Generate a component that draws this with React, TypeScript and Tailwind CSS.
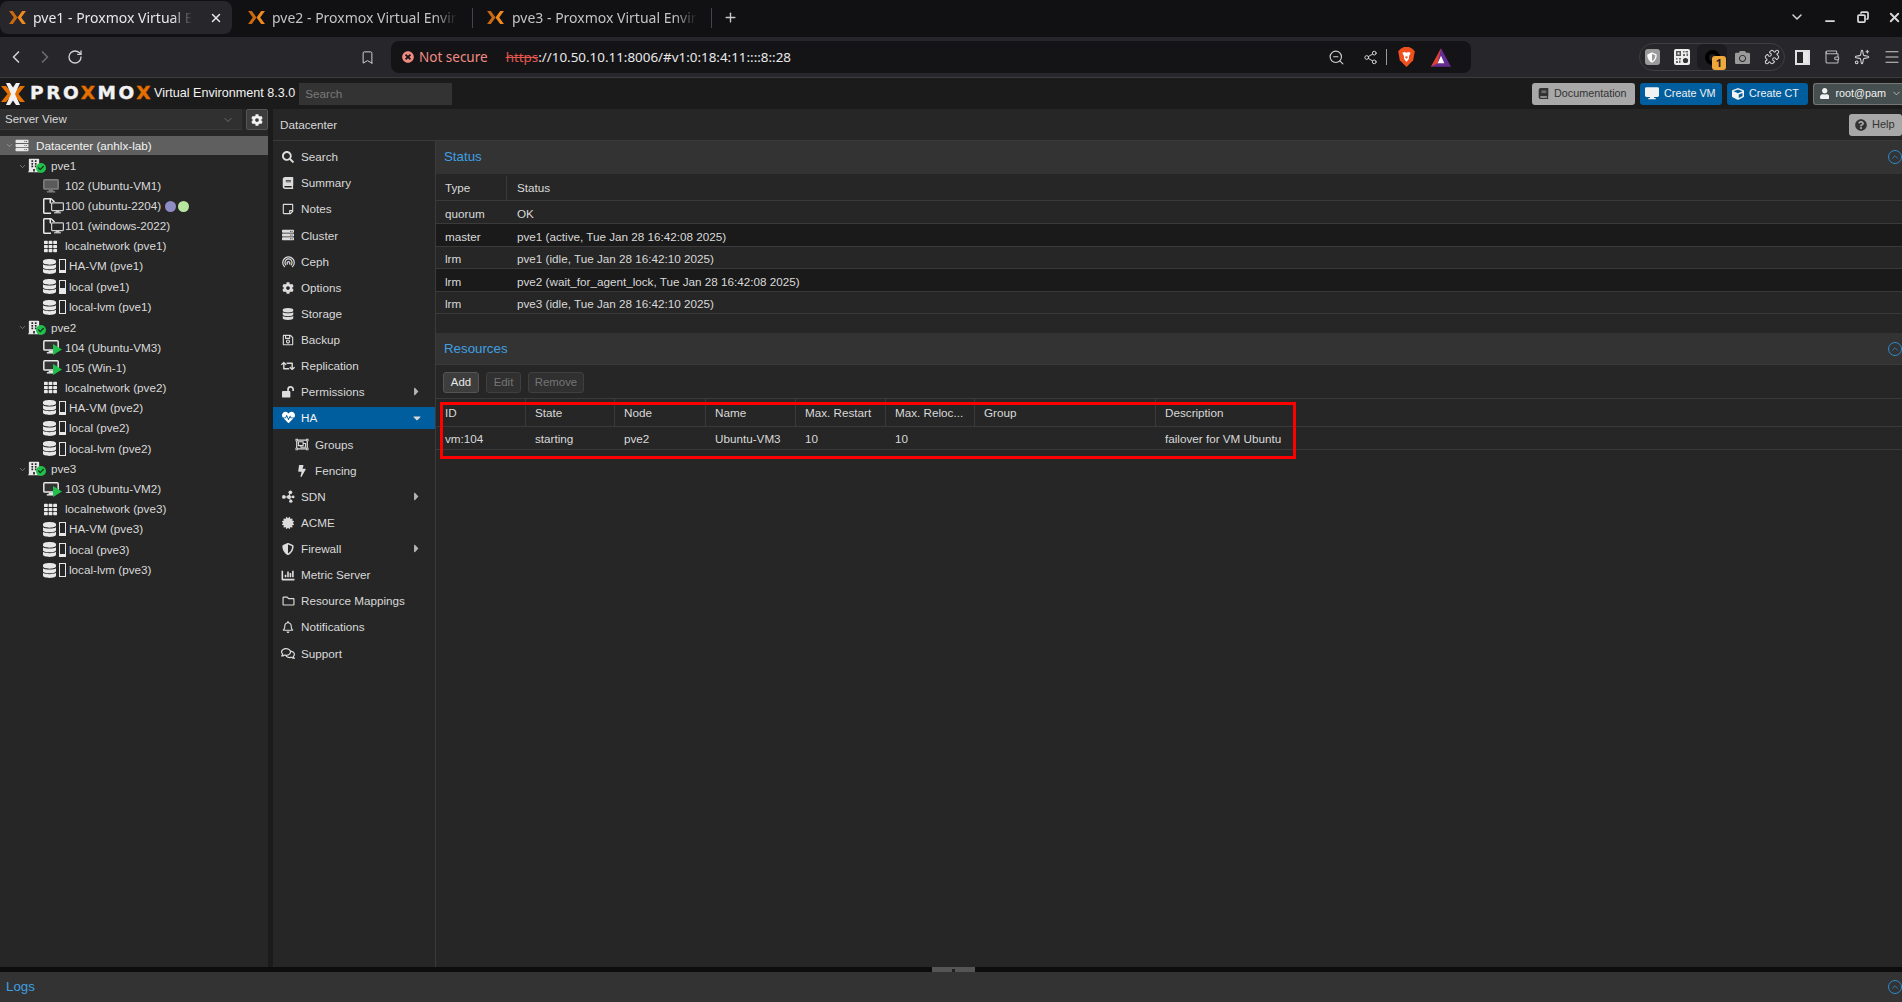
import React from 'react';
import { ChevronLeft, ChevronRight, RotateCw, Bookmark, ZoomOut, Share2, Puzzle, Plus, X, ChevronDown, ChevronUp, Minus, Menu, Wallet, Sparkles, Copy } from 'lucide-react';
import {
  FaSearch, FaBook, FaRegStickyNote, FaServer, FaCog, FaDatabase, FaRegSave, FaRetweet, FaHeartbeat,
  FaRegObjectGroup, FaBolt, FaCertificate, FaShieldAlt, FaRegFolder, FaRegBell, FaRegComments, FaCube,
  FaUser, FaQuestionCircle, FaTh, FaCaretRight, FaCaretDown, FaBuilding, FaCheck, FaRegFile, FaChartBar,
  FaTimesCircle, FaCamera,
} from 'react-icons/fa';

const ProxmoxMark = ({ className }: { className: string }) => (
  <svg viewBox="0 0 24 22" className={className}>
    <polygon points="0,3 5,3 12,11 5,19 0,19 6.5,11" fill="#e57000" />
    <polygon points="24,3 19,3 12,11 19,19 24,19 17.5,11" fill="#e57000" />
    <polygon points="5,0 9,0 12,4.5 15,0 19,0 14,11 19,22 15,22 12,17.5 9,22 5,22 10,11" fill="#f2f2f2" />
  </svg>
);

const TabMark = () => (
  <svg viewBox="0 0 18 16" className="w-[17px] h-[15px] shrink-0">
    <polygon points="0,1 4,1 9,8 4,15 0,15 5,8" fill="#c96a10" />
    <polygon points="18,1 14,1 9,8 14,15 18,15 13,8" fill="#f08a1c" />
  </svg>
);

const Tab = ({ title, active, w, pad, gap }: { title: string; active?: boolean; w: string; pad: string; gap: string }) => (
  <div className={w + ' ' + pad + (active
    ? ' h-[33px] mt-[1px] rounded-lg bg-[#26262b] flex items-center pr-[9px] text-[#e8e8e8]'
    : ' h-[33px] mt-[1px] flex items-center text-[#c4c4c4]')}>
    <TabMark />
    <span className={gap + ' whitespace-nowrap [mask-image:linear-gradient(to_right,black_88%,transparent)]'}>{title}</span>
    {active && <X className="w-[14px] h-[14px] ml-auto" strokeWidth={2.5} />}
    {!active && <div className="w-px h-[20px] bg-[#44444a] ml-auto" />}
  </div>
);

const Ext = ({ children, className }: { children: React.ReactNode; className?: string }) => (
  <div className={'w-[30px] h-full flex items-center justify-center relative shrink-0 ' + (className ?? '')}>{children}</div>
);

const BrowserChrome = () => (
  <div className="font-['Noto_Sans',sans-serif]">
    <div className="h-[37px] bg-[#111114] flex items-start text-[14px]">
      <Tab title="pve1 - Proxmox Virtual E" active w="w-[232px]" pad="pl-[9px]" gap="ml-[7px]" />
      <Tab title="pve2 - Proxmox Virtual Envir" w="w-[241px]" pad="pl-[16px]" gap="ml-[7px]" />
      <Tab title="pve3 - Proxmox Virtual Envir" w="w-[239px]" pad="pl-[14px]" gap="ml-[8px]" />
      <Plus className="w-[15px] h-[15px] text-[#c8c8c8] mt-[10px] ml-[11px]" strokeWidth={2.2} />
      <div className="ml-auto flex items-center h-[34px] text-[#d8d8d8]">
        <ChevronDown className="w-[16px] h-[16px] mr-[18px]" strokeWidth={2.2} />
        <Minus className="w-[14px] h-[14px] mr-[20px] mt-[7px]" strokeWidth={3} />
        <Copy className="w-[12px] h-[12px] mr-[18px] -scale-x-100" strokeWidth={3.5} />
        <X className="w-[15px] h-[15px]" strokeWidth={3} />
      </div>
    </div>
    <div className="h-[41px] bg-[#26262b] border-b border-[#3c3c40] flex items-center text-[#d0d0d0]">
      <ChevronLeft className="w-[20px] h-[20px] ml-[6px]" strokeWidth={2} />
      <ChevronRight className="w-[20px] h-[20px] ml-[9px] text-[#6b6b70]" strokeWidth={2} />
      <RotateCw className="w-[16px] h-[16px] ml-[12px]" strokeWidth={2} />
      <Bookmark className="w-[15px] h-[17px] ml-[277px]" strokeWidth={1.6} />
      <div className="ml-[16px] w-[1080px] h-[32px] rounded-lg bg-[#141417] flex items-center">
        <FaTimesCircle className="w-[12px] h-[12px] ml-[11px] text-[#f28b82]" />
        <span className="ml-[5px] text-[#f28b82] text-[13.5px]">Not secure</span>
        <span className="ml-[18px] text-[#e9e9e9] text-[13.4px]"><span className="text-[#e2574c] line-through">https</span>://10.50.10.11:8006/#v1:0:18:4:11::::8::28</span>
        <ZoomOut className="w-[17px] h-[17px] ml-auto" strokeWidth={1.6} />
        <Share2 className="w-[15px] h-[15px] ml-[18px]" strokeWidth={1.6} />
        <div className="w-px h-[16px] bg-[#9a9a9a] ml-[8px]" />
        <svg viewBox="0 0 20 24" className="w-[17px] h-[20px] ml-[11px]">
          <path d="M3 2 L7 0 H13 L17 2 L20 5 L18 16 L10 24 L2 16 L0 5 Z" fill="#f0501e" />
          <path d="M5 7 L8 6 L10 7 L12 6 L15 7 L13 11 L13 14 L10 18 L7 14 L7 11 Z" fill="#fff" />
          <path d="M8 12 L10 14 L12 12 L10 11 Z" fill="#f0501e" />
        </svg>
        <svg viewBox="0 0 24 22" className="w-[20px] h-[19px] ml-[16px] mr-[20px]">
          <polygon points="12,0 24,22 0,22" fill="#662d91" />
          <polygon points="12,0 0,22 8,18" fill="#e2402a" />
          <polygon points="12,9 16,18 8,18" fill="#fff" />
        </svg>
      </div>
      <div className="ml-[168px] h-[28px] w-[146px] rounded-[14px] border border-[#3e3e44] flex items-center justify-center">
        <Ext>
          <div className="w-[15px] h-[16px] rounded-[3px] bg-[#9a9a9a] flex items-center justify-center"><FaShieldAlt className="w-[10px] h-[11px] text-white" /></div>
        </Ext>
        <Ext>
          <svg viewBox="0 0 16 16" className="w-[16px] h-[16px]">
            <rect width="16" height="16" rx="2" fill="#eee" />
            <path d="M2 2h5v5H2z M3.5 3.5v2h2v-2z" fill="#555" fillRule="evenodd" />
            <path d="M9 2h1.5v1.5H9z M11.5 2H14v1.5h-2.5z M9 5h2v2H9z M12.5 4.5H14V7h-1.5z" fill="#666" />
            <path d="M2 9h1.5v1.5H2z M5 9h2v1.5H5z M2 12h2v2H2z M5 11.5h1.5V14H5z" fill="#666" />
            <circle cx="11.5" cy="11.5" r="2.6" fill="#333" />
          </svg>
        </Ext>
        <Ext className="bg-[#1c1c20] rounded-md">
          <div className="w-[15px] h-[15px] rounded-full border-[4px] border-black" />
          <span className="absolute right-[1px] bottom-[0px] w-[14px] h-[14px] rounded-[3px] bg-[#f0a83c] text-[#222] text-[11px] font-bold leading-[14px] text-center">1</span>
        </Ext>
        <Ext><FaCamera className="w-[15px] h-[15px] text-[#9a9a9a]" /></Ext>
        <Ext><Puzzle className="w-[16px] h-[16px]" strokeWidth={1.6} /></Ext>
      </div>
      <div className="ml-[10px] w-[15px] h-[15px] border-2 border-[#e0e0e0] flex shrink-0"><div className="w-[6px]" /><div className="flex-1 bg-[#e8e8e8]" /></div>
      <Wallet className="w-[16px] h-[16px] ml-[14px] text-[#bdbdbd] shrink-0" strokeWidth={1.6} />
      <Sparkles className="w-[16px] h-[16px] ml-[14px] shrink-0" strokeWidth={1.6} />
      <Menu className="w-[18px] h-[18px] ml-[13px] shrink-0" strokeWidth={1.6} />
    </div>
  </div>
);

const PveButton = ({ icon, label, className, gap, tail }: { icon: React.ReactNode; label: string; className: string; gap?: string; tail?: React.ReactNode }) => (
  <div className={'h-[22px] rounded-[3px] flex items-center ' + (gap ?? 'gap-[5px]') + ' ' + className}>
    {icon}
    <span>{label}</span>
    {tail}
  </div>
);

const PveHeader = () => (
  <div className="h-[31px] bg-[#1b1b1b] flex items-center text-[10.8px]">
    <ProxmoxMark className="w-[24px] h-[22px] ml-[1px] shrink-0" />
    <span className="ml-[5px] font-['DejaVu_Sans',sans-serif] font-bold text-[18.5px] leading-none tracking-[2.6px] text-[#f2f2f2] [-webkit-text-stroke:0.4px]">PRO<span className="text-[#e57000]">X</span>MO<span className="text-[#e57000]">X</span></span>
    <span className="ml-[1px] text-[#f2f2f2] text-[12.6px] whitespace-nowrap">Virtual Environment 8.3.0</span>
    <div className="ml-[4px] w-[153px] h-[22px] bg-[#333] text-[#7a7a7a] text-[11.7px] flex items-center pl-[6px]">Search</div>
    <div className="ml-auto flex gap-[5px]">
      <PveButton className="w-[103px] pl-[6px] bg-[#a8a8a8] text-[#333]" gap="gap-[5px]" icon={<FaBook className="w-[11px] h-[11px]" />} label="Documentation" />
      <PveButton className="w-[82px] pl-[5px] bg-[#005e9e] text-[#f2f2f2]" gap="gap-[5px]" icon={<DesktopIcon cls="w-[14px] h-[13px]" frame="#f2f2f2" screen="#f2f2f2" />} label="Create VM" />
      <PveButton className="w-[81px] pl-[5px] bg-[#005e9e] text-[#f2f2f2]" gap="gap-[5px]" icon={<FaCube className="w-[12px] h-[12px]" />} label="Create CT" />
      <PveButton className="w-[89px] pl-[6px] bg-[#454f4f] border border-[#757575] text-[#f2f2f2] rounded-r-none border-r-0" gap="gap-[6px]" icon={<FaUser className="w-[10px] h-[11px]" />} label="root@pam" tail={<ChevronDown className="w-[11px] h-[11px] -ml-[1px] text-[#c0c0c0] shrink-0" />} />
    </div>
  </div>
);

function DesktopIcon({ cls, frame, screen }: { cls: string; frame: string; screen: string }) {
  return (
    <svg viewBox="0 0 17 15" className={cls}>
      <rect x="0.8" y="0.8" width="15.4" height="10" rx="1" fill={screen} stroke={frame} strokeWidth="1.6" />
      <rect x="6" y="11.5" width="5" height="2" fill={frame} />
      <rect x="4" y="13" width="9" height="1.5" fill={frame} />
    </svg>
  );
}

const Storage = ({ level }: { level: string }) => (
  <div className="flex items-center shrink-0">
    <FaDatabase className="w-[13px] h-[15px] text-[#e8e8e8]" />
    <div className="ml-[3px] w-[7px] h-[14px] border border-[#e8e8e8] flex items-end"><div className={level + ' w-full bg-[#e8e8e8]'} /></div>
  </div>
);

const Guest = ({ kind }: { kind: 'stopped' | 'run' | 'template' }) => {
  if (kind === 'template') {
    return (
      <div className="w-[20px] h-[16px] relative shrink-0">
        <FaRegFile className="w-[12px] h-[16px] text-[#e8e8e8]" />
        <div className="absolute left-[8px] top-[4px] bg-[#262626]">
          <DesktopIcon cls="w-[13px] h-[12px]" frame="#d0d0d0" screen="#262626" />
        </div>
      </div>
    );
  }
  return (
    <div className="w-[20px] h-[15px] relative shrink-0">
      {kind === 'run'
        ? <DesktopIcon cls="w-[16px] h-[14px]" frame="#e8e8e8" screen="#333" />
        : <DesktopIcon cls="w-[16px] h-[14px]" frame="#808080" screen="#5a5a5a" />}
      {kind === 'run' && (
        <svg viewBox="0 0 9 11" className="w-[9px] h-[11px] absolute left-[10px] top-[4px]">
          <polygon points="0,0 9,5.5 0,11" fill="#21bf4b" />
        </svg>
      )}
    </div>
  );
};

const NodeIcon = () => (
  <div className="w-[20px] h-[16px] relative shrink-0">
    <FaBuilding className="w-[12px] h-[15px] text-[#e8e8e8]" />
    <div className="absolute left-[8px] top-[5px] w-[10px] h-[10px] rounded-full bg-[#21bf4b] flex items-center justify-center">
      <FaCheck className="w-[6px] h-[6px] text-[#10331a]" />
    </div>
  </div>
);

const NodeRow = ({ name }: { name: string }) => (
  <div className="h-[20px] flex items-center pl-[18px]">
    <ChevronDown className="w-[9px] h-[9px] text-[#8c8c8c] mr-[1px]" />
    <NodeIcon />
    <span className="ml-[3px]">{name}</span>
  </div>
);

const GuestRow = ({ kind, label, tags }: { kind: 'stopped' | 'run' | 'template'; label: string; tags?: boolean }) => (
  <div className="h-[20px] flex items-center pl-[43px]">
    <Guest kind={kind} />
    <span className="ml-[2px]">{label}</span>
    {tags && (
      <>
        <span className="ml-[4px] w-[11px] h-[11px] rounded-full bg-[#8f8bc4]" />
        <span className="ml-[2px] w-[11px] h-[11px] rounded-full bg-[#b8e6a0]" />
      </>
    )}
  </div>
);

const NetRow = ({ label }: { label: string }) => (
  <div className="h-[20px] flex items-center pl-[43px]">
    <FaTh className="w-[15px] h-[13px] text-[#e8e8e8] mr-[7px]" />
    <span>{label}</span>
  </div>
);

const StoreRow = ({ label, level }: { label: string; level: string }) => (
  <div className="h-[20.5px] flex items-center pl-[43px]">
    <Storage level={level} />
    <span className="ml-[3px]">{label}</span>
  </div>
);

const Tree = () => (
  <div className="w-[268px] shrink-0 bg-[#262626] text-[11.7px] text-[#d9d9d9]">
    <div className="h-[21px] flex">
      <div className="w-[242px] bg-[#303030] flex items-center pl-[5px] pr-[8px] pt-[1px] border-b border-[#3a3a3a]">
        <span className="text-[#d9d9d9] text-[11.5px]">Server View</span>
        <ChevronDown className="w-[12px] h-[12px] ml-auto text-[#6f6f6f]" />
      </div>
      <div className="ml-[4px] w-[22px] bg-[#3d3d3d] border border-[#555] rounded-[2px] flex items-center justify-center">
        <FaCog className="w-[12px] h-[12px] text-[#f2f2f2]" />
      </div>
    </div>
    <div className="pt-[6px]">
      <div className="h-[19px] mb-[1px] bg-[#5f5f5f] flex items-center pl-[5px] text-[#f2f2f2]">
        <ChevronDown className="w-[9px] h-[9px] text-[#a0a0a0]" />
        <FaServer className="w-[16px] h-[13px] text-[#e8e8e8]" />
        <span className="ml-[6px]">Datacenter (anhlx-lab)</span>
      </div>
      <NodeRow name="pve1" />
      <GuestRow kind="stopped" label="102 (Ubuntu-VM1)" />
      <GuestRow kind="template" label="100 (ubuntu-2204)" tags />
      <GuestRow kind="template" label="101 (windows-2022)" />
      <NetRow label="localnetwork (pve1)" />
      <StoreRow label="HA-VM (pve1)" level="h-[2px]" />
      <StoreRow label="local (pve1)" level="h-[5px]" />
      <StoreRow label="local-lvm (pve1)" level="h-0" />
      <NodeRow name="pve2" />
      <GuestRow kind="run" label="104 (Ubuntu-VM3)" />
      <GuestRow kind="run" label="105 (Win-1)" />
      <NetRow label="localnetwork (pve2)" />
      <StoreRow label="HA-VM (pve2)" level="h-[2px]" />
      <StoreRow label="local (pve2)" level="h-[2px]" />
      <StoreRow label="local-lvm (pve2)" level="h-0" />
      <NodeRow name="pve3" />
      <GuestRow kind="run" label="103 (Ubuntu-VM2)" />
      <NetRow label="localnetwork (pve3)" />
      <StoreRow label="HA-VM (pve3)" level="h-[2px]" />
      <StoreRow label="local (pve3)" level="h-[2px]" />
      <StoreRow label="local-lvm (pve3)" level="h-0" />
    </div>
  </div>
);

const CephIcon = () => (
  <svg viewBox="0 0 14 14" className="w-[13px] h-[13px]" fill="none" stroke="#dcdcdc" strokeWidth="1.3">
    <path d="M3 13 A6.2 6.2 0 1 1 11 13" />
    <path d="M4.6 11 A3.8 3.8 0 1 1 9.4 11" />
    <path d="M6.3 10 A1.5 1.5 0 1 1 7.7 10" />
  </svg>
);

const SdnIcon = () => (
  <svg viewBox="0 0 14 14" className="w-[13px] h-[13px]" fill="#dcdcdc">
    <circle cx="9" cy="2.5" r="2" /><circle cx="2" cy="7.5" r="2" /><circle cx="7.5" cy="7.5" r="2.2" />
    <circle cx="12" cy="7.5" r="1.5" /><circle cx="9.5" cy="12" r="1.8" />
    <path d="M8.5 3 L7.5 7.5 L2 7.5 M7.5 7.5 L12 7.5 M7.5 7.5 L9.5 12" stroke="#dcdcdc" fill="none" />
  </svg>
);

const OpenLock = () => (
  <svg viewBox="0 0 14 12" className="w-[13px] h-[12px]">
    <rect x="0" y="5" width="9" height="7" rx="1" fill="#dcdcdc" />
    <path d="M6.5 5 V3.2 A2.7 2.7 0 0 1 12 3.2 V5" fill="none" stroke="#dcdcdc" strokeWidth="1.8" />
  </svg>
);

const ic = 'w-[12px] h-[12px]';

const NavItem = ({ icon, label, sub, arrow, active }: { icon: React.ReactNode; label: string; sub?: boolean; arrow?: boolean; active?: boolean }) => (
  <div className={active
    ? 'h-[22.1px] mt-[2px] mb-[2.5px] bg-[#005e9e] flex items-center pl-[8px] text-[#f2f2f2]'
    : 'h-[26.1px] flex items-center text-[#d9d9d9] ' + (sub ? 'pl-[22px]' : 'pl-[8px]')}>
    <span className="flex justify-center text-[#dcdcdc] w-[14px] shrink-0 mr-[6px]">{icon}</span>
    <span>{label}</span>
    {arrow && <FaCaretRight className="w-[9px] h-[13px] ml-auto mr-[14px] text-[#b5b5b5]" />}
    {active && <FaCaretDown className="w-[12px] h-[12px] ml-auto mr-[12px] text-[#d9d9d9]" />}
  </div>
);

const Nav = () => (
  <div className="w-[163px] shrink-0 border-r border-[#3a3a3a] pt-[3px] text-[11.7px]">
    <NavItem icon={<FaSearch className={ic} />} label="Search" />
    <NavItem icon={<FaBook className={ic} />} label="Summary" />
    <NavItem icon={<FaRegStickyNote className={ic} />} label="Notes" />
    <NavItem icon={<FaServer className={ic} />} label="Cluster" />
    <NavItem icon={<CephIcon />} label="Ceph" />
    <NavItem icon={<FaCog className={ic} />} label="Options" />
    <NavItem icon={<FaDatabase className={ic} />} label="Storage" />
    <NavItem icon={<FaRegSave className={ic} />} label="Backup" />
    <NavItem icon={<FaRetweet className="w-[14px] h-[12px]" />} label="Replication" />
    <NavItem icon={<OpenLock />} label="Permissions" arrow />
    <NavItem icon={<FaHeartbeat className="w-[13px] h-[13px] text-white" />} label="HA" active />
    <NavItem icon={<FaRegObjectGroup className="w-[14px] h-[13px]" />} label="Groups" sub />
    <NavItem icon={<FaBolt className={ic} />} label="Fencing" sub />
    <NavItem icon={<SdnIcon />} label="SDN" arrow />
    <NavItem icon={<FaCertificate className={ic} />} label="ACME" />
    <NavItem icon={<FaShieldAlt className={ic} />} label="Firewall" arrow />
    <NavItem icon={<FaChartBar className="w-[14px] h-[13px]" />} label="Metric Server" />
    <NavItem icon={<FaRegFolder className="w-[13px] h-[12px]" />} label="Resource Mappings" />
    <NavItem icon={<FaRegBell className={ic} />} label="Notifications" />
    <NavItem icon={<FaRegComments className="w-[14px] h-[13px]" />} label="Support" />
  </div>
);

const Collapse = () => (
  <div className="w-[14px] h-[14px] rounded-full border border-[#2a8ccf] flex items-center justify-center shrink-0">
    <ChevronUp className="w-[10px] h-[10px] text-[#2a8ccf]" />
  </div>
);

const PanelHead = ({ title, className }: { title: string; className: string }) => (
  <div className={'bg-[#333] flex items-center justify-between pl-[8px] text-[13.3px] text-[#3fa0e4] ' + className}>
    <span>{title}</span>
    <Collapse />
  </div>
);

const statusRows = [
  { h: 'h-[23px] pt-[4px] bg-[#262626]', t: 'quorum', s: 'OK' },
  { h: 'h-[23px] pt-[3px] bg-[#1a1a1a]', t: 'master', s: 'pve1 (active, Tue Jan 28 16:42:08 2025)' },
  { h: 'h-[22px] pt-[2px] bg-[#262626]', t: 'lrm', s: 'pve1 (idle, Tue Jan 28 16:42:10 2025)' },
  { h: 'h-[23px] pt-[3px] bg-[#1a1a1a]', t: 'lrm', s: 'pve2 (wait_for_agent_lock, Tue Jan 28 16:42:08 2025)' },
  { h: 'h-[22px] pt-[2px] bg-[#262626]', t: 'lrm', s: 'pve3 (idle, Tue Jan 28 16:42:10 2025)' },
];

const resourceCols = [
  { w: 'w-[90px] border-r', head: 'ID', val: 'vm:104' },
  { w: 'w-[89px] border-r', head: 'State', val: 'starting' },
  { w: 'w-[91px] border-r', head: 'Node', val: 'pve2' },
  { w: 'w-[90px] border-r', head: 'Name', val: 'Ubuntu-VM3' },
  { w: 'w-[90px] border-r', head: 'Max. Restart', val: '10' },
  { w: 'w-[89px] border-r', head: 'Max. Reloc...', val: '10' },
  { w: 'w-[181px] border-r', head: 'Group', val: '' },
  { w: 'w-[180px]', head: 'Description', val: 'failover for VM Ubuntu' },
];

const ToolBtn = ({ label, w, on }: { label: string; w: string; on?: boolean }) => (
  <div className={w + ' h-[21px] rounded-[3px] border flex items-center justify-center ' + (on ? 'bg-[#3d3d3d] border-[#555] text-[#e8e8e8]' : 'bg-[#303030] border-[#3f3f3f] text-[#757575]')}>{label}</div>
);

const Content = () => (
  <div className="flex-1 text-[11.7px] text-[#d9d9d9] overflow-hidden">
    <PanelHead title="Status" className="h-[33px] pb-[1px]" />
    <div className="h-[27px] pt-[2px] flex border-b border-[#3a3a3a]">
      <div className="w-[71px] pl-[9px] flex items-center border-r border-[#3a3a3a]">Type</div>
      <div className="pl-[10px] flex items-center">Status</div>
    </div>
    {statusRows.map((r, i) => (
      <div key={i} className={r.h + ' flex items-center border-b border-[#3a3a3a]'}>
        <div className="w-[72px] pl-[9px]">{r.t}</div>
        <div className="pl-[9px]">{r.s}</div>
      </div>
    ))}
    <div className="h-[19px]" />
    <PanelHead title="Resources" className="h-[32px] border-b border-[#3a3a3a]" />
    <div className="h-[33px] pt-[2px] flex items-center pl-[7px] gap-[7px] text-[11.4px]">
      <ToolBtn label="Add" w="w-[36px]" on />
      <ToolBtn label="Edit" w="w-[35px]" />
      <ToolBtn label="Remove" w="w-[56px]" />
    </div>
    <div className="relative">
      <div className="h-[29px] flex border-y border-[#3a3a3a]">
        {resourceCols.map((c) => (
          <div key={c.head} className={c.w + ' pl-[9px] flex items-center border-[#3a3a3a] shrink-0'}>{c.head}</div>
        ))}
      </div>
      <div className="h-[23px] pt-[2px] flex border-b border-[#3a3a3a]">
        {resourceCols.map((c) => (
          <div key={c.head} className={c.w.split(' ')[0] + ' pl-[9px] flex items-center shrink-0 whitespace-nowrap'}>{c.val}</div>
        ))}
      </div>
      <div className="absolute left-[4px] top-[4px] w-[856px] h-[57px] border-[3px] border-[#ff0000]" />
    </div>
  </div>
);

export default function App() {
  return (
    <div className="w-[1902px] h-[1002px] flex flex-col overflow-hidden bg-[#1b1b1b] font-['Liberation_Sans',sans-serif]">
      <BrowserChrome />
      <PveHeader />
      <div className="flex-1 flex min-h-0">
        <Tree />
        <div className="w-[5px] bg-[#1b1b1b] shrink-0" />
        <div className="flex-1 flex flex-col bg-[#262626] min-w-0">
          <div className="h-[32px] flex items-center justify-between pl-[7px] border-b border-[#3a3a3a] text-[11.7px] text-[#d9d9d9] shrink-0">
            <span className="pt-[1px]">Datacenter</span>
            <PveButton className="w-[53px] pl-[6px] bg-[#a8a8a8] text-[#333] text-[11px]" icon={<FaQuestionCircle className="w-[12px] h-[12px]" />} label="Help" />
          </div>
          <div className="flex-1 flex min-h-0">
            <Nav />
            <Content />
          </div>
        </div>
      </div>
      <div className="h-[5px] bg-[#0d0d0d] shrink-0">
        <div className="ml-[932px] w-[43px] h-full bg-[#555] flex justify-center"><div className="w-[3px] h-[3px] mt-[2px] bg-[#222]" /></div>
      </div>
      <div className="h-[30px] bg-[#333] flex items-center justify-between pl-[6px] text-[13.3px] text-[#3fa0e4] shrink-0">
        <span>Logs</span>
        <Collapse />
      </div>
    </div>
  );
}
